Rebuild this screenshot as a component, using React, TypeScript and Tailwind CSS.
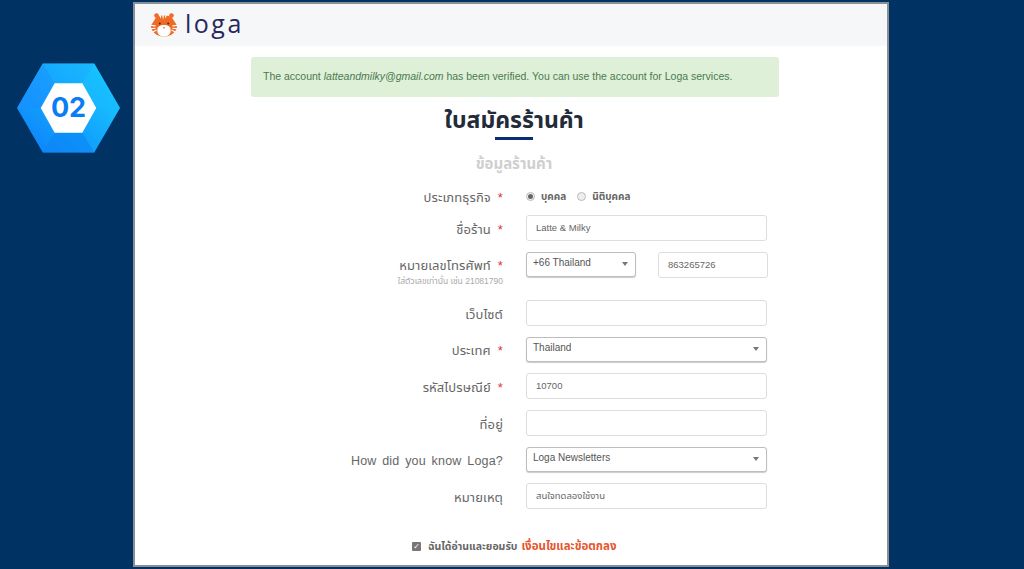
import React from 'react';

const thaiFont = "font-['Liberation_Sans','Noto_Sans','Noto_Sans_Thai','DejaVu_Sans',sans-serif]";

function Hexagon() {
  return (
    <div className="relative h-[90px] w-[103px]">
      <svg width="103" height="90" viewBox="0 0 104 90" className="block">
        <defs>
          <linearGradient id="hexGrad" x1="0" y1="1" x2="1" y2="0">
            <stop offset="0" stopColor="#0c7cfa" />
            <stop offset="1" stopColor="#1ad6ff" />
          </linearGradient>
        </defs>
        <polygon points="26,0 78,0 104,45 78,90 26,90 0,45" fill="url(#hexGrad)" />
        <polygon points="26,0 78,0 66,20 38,20" fill="#1a9bff" fillOpacity="0.35" />
        <polygon points="78,0 104,45 80,45 66,20" fill="#18b8ff" fillOpacity="0.5" />
        <polygon points="0,45 26,0 38,20 24,45" fill="#1a8fff" fillOpacity="0.6" />
        <polygon points="26,90 78,90 66,70 38,70" fill="#0c86f5" fillOpacity="0.6" />
        <polygon points="38,20 66,20 80,45 66,70 38,70 24,45" fill="#ffffff" />
      </svg>
      <span className="absolute inset-0 flex items-center justify-center font-['Inter',sans-serif] text-[27px] font-bold text-[#0b7df2]">
        02
      </span>
    </div>
  );
}

function TigerLogo() {
  return (
    <svg width="28" height="26" viewBox="0 0 30 27">
      <circle cx="7" cy="4.500" r="2.500" fill="#ef6a25" />
      <circle cx="23" cy="4.500" r="2.500" fill="#ef6a25" />
      <path d="M5 9 C7 3 23 3 25 9 L29 15 C29 22 22 27 15 27 C8 27 1 22 1 15 Z" fill="#ef6a25" />
      <path d="M13 4 L14 9 L15 4 Z M16 4 L16.500 8 L18 4 Z M10 4.500 L11.500 8 L12 4.500 Z" fill="#ffffff" />
      <path d="M1 15 L6 15.500 M1.500 18.500 L6 18 M3 22 L7 20 M29 15 L24 15.500 M28.500 18.500 L24 18 M27 22 L23 20" stroke="#ffffff" strokeWidth="1.200" />
      <path d="M8 19 C8 13 22 13 22 19 C23 24 19 27 15 27 C11 27 7 24 8 19 Z" fill="#ffffff" />
      <circle cx="10.500" cy="13" r="1" fill="#3a2a20" />
      <circle cx="19.500" cy="13" r="1" fill="#3a2a20" />
      <path d="M13.500 17 L16.500 17 L15 18.500 Z" fill="#c9694a" />
    </svg>
  );
}

function Label({ text, required, hint, wide }: { text: string; required?: boolean; hint?: string; wide?: boolean }) {
  return (
    <div className="flex w-[391px] shrink-0 flex-col items-end pr-[23px] pt-[3px] text-right">
      <div className={`whitespace-nowrap leading-[20px] text-[#666666] ${wide ? 'text-[12.500px] tracking-[0.2px] [word-spacing:2px]' : 'text-[13px] tracking-[0.1px]'}`}>
        {text}
        {required && <span className="ml-[7px] text-[#e0313b]">*</span>}
      </div>
      {hint && <div className="whitespace-nowrap text-[8.500px] leading-[11px] text-[#aaaaaa]">{hint}</div>}
    </div>
  );
}

function TextBox({ value, className = 'w-[241px]' }: { value?: string; className?: string }) {
  return (
    <div className={`flex h-[26px] items-center rounded-[3px] border border-[#dddddd] bg-white pl-[9px] text-[9.500px] text-[#666666] ${className}`}>
      {value}
    </div>
  );
}

function SelectBox({ value, className = 'w-[241px]' }: { value: string; className?: string }) {
  return (
    <div className={`flex h-[25px] items-start justify-between rounded-[3px] border border-[#bdbdbd] bg-white pl-[6px] pr-[7px] pt-[3px] text-[10px] leading-[14px] text-[#555555] shadow-[0_1px_1px_rgba(0,0,0,0.2)] ${className}`}>
      <span>{value}</span>
      <span className="mt-[6px] h-0 w-0 border-x-[3px] border-t-[4px] border-x-transparent border-t-[#777777]" />
    </div>
  );
}

function Row({ className = '', children }: { className?: string; children: React.ReactNode }) {
  return <div className={`flex items-center ${className}`}>{children}</div>;
}

export default function App() {
  return (
    <div className={`flex h-[569px] w-[1024px] overflow-hidden bg-[#003263] ${thaiFont}`}>
      <aside className="w-[133px] shrink-0 pl-[17px] pt-[63px]">
        <Hexagon />
      </aside>

      <main className="mt-[2px] h-[565px] w-[756px] shrink-0 overflow-hidden border-2 border-[#8a8f96] bg-white">
        <header className="flex h-[42px] items-center gap-[7px] bg-[#f6f7f9] pb-[3px] pl-[15px]">
          <TigerLogo />
          <span className="font-['Open_Sans',sans-serif] text-[25px] font-medium leading-none tracking-[2.500px] text-[#27285f]">loga</span>
        </header>

        <div className="ml-[116px] mt-[11px] flex h-[40px] w-[528px] items-center rounded-[3px] bg-[#dff0d8] pl-[12px] text-[10.500px] text-[#4a7a4f]">
          <span>The account <em>latteandmilky@gmail.com</em> has been verified. You can use the account for Loga services.</span>
        </div>

        <div className="pl-[6px]">
          <h1 className="mt-[7px] text-center text-[23px] font-bold leading-[32px] text-[#232b3a]">ใบสมัครร้านค้า</h1>
          <div className="mx-auto mt-[1px] h-[3px] w-[38px] bg-[#0b2a78]" />
          <h2 className="mt-[14px] text-center text-[15px] font-bold leading-[20px] text-[#cfcfcf]">ข้อมูลร้านค้า</h2>
        </div>

        <div className="mt-[11px] flex flex-col">
          <Row className="h-[22px]">
            <Label text="ประเภทธุรกิจ" required />
            <div className="flex items-center text-[10px] font-bold text-[#666666]">
              <span className="flex h-[9px] w-[9px] items-center justify-center rounded-full border border-[#bbbbbb] bg-[#f3f3f3]">
                <span className="h-[5px] w-[5px] rounded-full bg-[#666666]" />
              </span>
              <span className="ml-[6px]">บุคคล</span>
              <span className="ml-[11px] h-[9px] w-[9px] rounded-full border border-[#bbbbbb] bg-[#eeeeee]" />
              <span className="ml-[6px]">นิติบุคคล</span>
            </div>
          </Row>

          <Row className="mt-[8px]">
            <Label text="ชื่อร้าน" required />
            <TextBox value="Latte &amp; Milky" />
          </Row>

          <div className="mt-[11px] flex items-start">
            <div className="pt-[1px]"><Label text="หมายเลขโทรศัพท์" required hint="ใส่ตัวเลขเท่านั้น เช่น 21081790" /></div>
            <SelectBox value="+66 Thailand" className="w-[110px]" />
            <TextBox value="863265726" className="ml-[22px] w-[110px]" />
          </div>

          <Row className="mt-[13px]">
            <Label text="เว็บไซต์" />
            <TextBox />
          </Row>

          <Row className="mt-[11px]">
            <Label text="ประเทศ" required />
            <SelectBox value="Thailand" />
          </Row>

          <Row className="mt-[11px]">
            <Label text="รหัสไปรษณีย์" required />
            <TextBox value="10700" />
          </Row>

          <Row className="mt-[11px]">
            <Label text="ที่อยู่" />
            <TextBox />
          </Row>

          <Row className="mt-[11px]">
            <Label text="How did you know Loga?" wide />
            <SelectBox value="Loga Newsletters" />
          </Row>

          <Row className="mt-[11px]">
            <Label text="หมายเหตุ" />
            <TextBox value="สนใจทดลองใช้งาน" />
          </Row>
        </div>

        <div className="mt-[29px] flex items-center pl-[277px] text-[10.500px] font-bold text-[#666666]">
          <span className="flex h-[9px] w-[9px] items-center justify-center rounded-[1px] bg-[#777777] text-[8px] leading-none text-white">✓</span>
          <span className="ml-[7px]">ฉันได้อ่านและยอมรับ</span>
          <span className="ml-[4px] text-[11.500px] text-[#e8552d]">เงื่อนไขและข้อตกลง</span>
        </div>
      </main>
    </div>
  );
}
